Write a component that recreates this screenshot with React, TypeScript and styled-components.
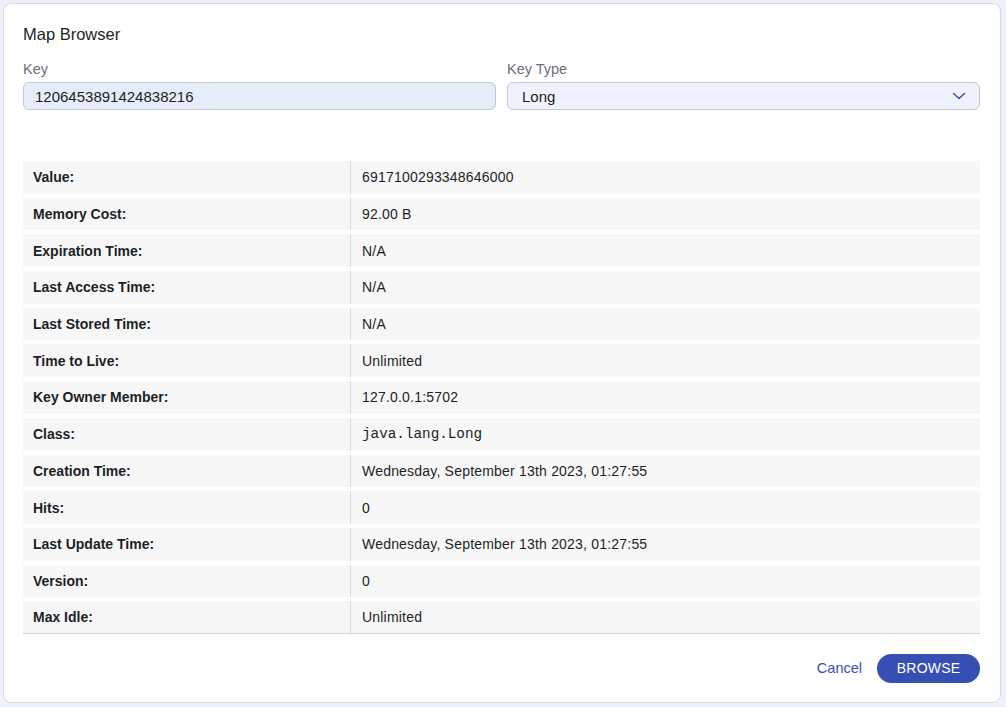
import React from "react";
import styled, { createGlobalStyle } from "styled-components";

const GlobalStyle = createGlobalStyle`
  html, body {
    margin: 0;
    padding: 0;
    background: #eef1f9;
    font-family: "Liberation Sans", Arial, sans-serif;
    color: #1f2229;
  }
  * { box-sizing: border-box; }
`;

const rows: { label: string; value: string; mono?: boolean }[] = [
  { label: "Value:", value: "6917100293348646000" },
  { label: "Memory Cost:", value: "92.00 B" },
  { label: "Expiration Time:", value: "N/A" },
  { label: "Last Access Time:", value: "N/A" },
  { label: "Last Stored Time:", value: "N/A" },
  { label: "Time to Live:", value: "Unlimited" },
  { label: "Key Owner Member:", value: "127.0.0.1:5702" },
  { label: "Class:", value: "java.lang.Long", mono: true },
  { label: "Creation Time:", value: "Wednesday, September 13th 2023, 01:27:55" },
  { label: "Hits:", value: "0" },
  { label: "Last Update Time:", value: "Wednesday, September 13th 2023, 01:27:55" },
  { label: "Version:", value: "0" },
  { label: "Max Idle:", value: "Unlimited" },
];

const App = () => {
  return (
    <>
      <GlobalStyle />
      <Page>
        <Dialog>
          <Title>Map Browser</Title>
          <Fields>
            <Field>
              <Label>Key</Label>
              <Input defaultValue="1206453891424838216" />
            </Field>
            <Field>
              <Label>Key Type</Label>
              <Select>
                <span>Long</span>
                <svg width="16" height="16" viewBox="0 0 16 16" fill="none">
                  <path
                    d="M2.5 5.5L8 10.5L13.5 5.5"
                    stroke="#3b4fb4"
                    strokeWidth="1.5"
                    strokeLinecap="round"
                    strokeLinejoin="round"
                  />
                </svg>
              </Select>
            </Field>
          </Fields>
          <Table>
            {rows.map((r, i) => (
              <Row key={r.label} last={i === rows.length - 1}>
                <Cell bold>{r.label}</Cell>
                <Cell divider mono={r.mono}>
                  {r.value}
                </Cell>
              </Row>
            ))}
          </Table>
          <Footer>
            <TextButton>Cancel</TextButton>
            <PrimaryButton>BROWSE</PrimaryButton>
          </Footer>
        </Dialog>
      </Page>
    </>
  );
};

export default App;

const Page = styled.div`
  width: 1006px;
  height: 707px;
  padding: 3px 5px 4px 3px;
`;

const Dialog = styled.div`
  width: 998px;
  height: 700px;
  background: #ffffff;
  border: 1px solid #d7dae2;
  border-radius: 8px;
  padding: 20px 20px 19px 19px;
  display: flex;
  flex-direction: column;
`;

const Title = styled.div`
  font-size: 16.5px;
  line-height: 20px;
  color: #1c1f26;
  margin-bottom: 16px;
`;

const Fields = styled.div`
  display: grid;
  grid-template-columns: 1fr 1fr;
  gap: 11px;
`;

const Field = styled.div`
  display: flex;
  flex-direction: column;
  gap: 4px;
`;

const Label = styled.label`
  font-size: 14.5px;
  line-height: 18px;
  color: #6b6f79;
`;

const Input = styled.input`
  height: 28px;
  border: 1px solid #c3c7d0;
  border-radius: 6px;
  background: #e6ecfa;
  padding: 0 11px;
  font-family: "Liberation Sans", Arial, sans-serif;
  font-size: 15px;
  color: #1c1f26;
  outline: none;
`;

const Select = styled.div`
  height: 28px;
  border: 1px solid #c3c7d0;
  border-radius: 6px;
  background: #eef2fc;
  padding: 0 12px 0 14px;
  display: flex;
  align-items: center;
  justify-content: space-between;
  font-size: 15px;
  color: #1c1f26;
`;

const Table = styled.div`
  margin-top: 51px;
  display: flex;
  flex-direction: column;
  gap: 4px;
`;

const Row = styled.div<{ last?: boolean }>`
  height: 32.7px;
  display: grid;
  grid-template-columns: 327px 1fr;
  background: #f7f7f7;
  border-bottom: ${(p) => (p.last ? "1px solid #d2d2d2" : "none")};
`;

const Cell = styled.div<{ bold?: boolean; divider?: boolean; mono?: boolean }>`
  display: flex;
  align-items: center;
  padding-left: ${(p) => (p.divider ? "11px" : "10px")};
  border-left: ${(p) => (p.divider ? "1px solid #d9d9d9" : "none")};
  font-family: ${(p) =>
    p.mono
      ? `"Liberation Mono", "Courier New", monospace`
      : `"Liberation Sans", Arial, sans-serif`};
  font-size: ${(p) => (p.mono ? "14.3px" : "14px")};
  font-weight: ${(p) => (p.bold ? 700 : 400)};
  letter-spacing: ${(p) => (p.mono || p.bold ? "0" : "0.2px")};
  color: #1c1f26;
`;

const Footer = styled.div`
  margin-top: 20px;
  display: flex;
  justify-content: flex-end;
  align-items: center;
  gap: 15px;
`;

const TextButton = styled.button`
  border: none;
  background: none;
  padding: 0;
  font-family: "Liberation Sans", Arial, sans-serif;
  font-size: 14.5px;
  color: #3b4fb4;
  cursor: pointer;
`;

const PrimaryButton = styled.button`
  width: 103px;
  height: 29px;
  border: none;
  border-radius: 15px;
  background: #354fb4;
  color: #ffffff;
  font-family: "Liberation Sans", Arial, sans-serif;
  font-size: 14px;
  font-weight: 500;
  letter-spacing: 0.2px;
  cursor: pointer;
`;
